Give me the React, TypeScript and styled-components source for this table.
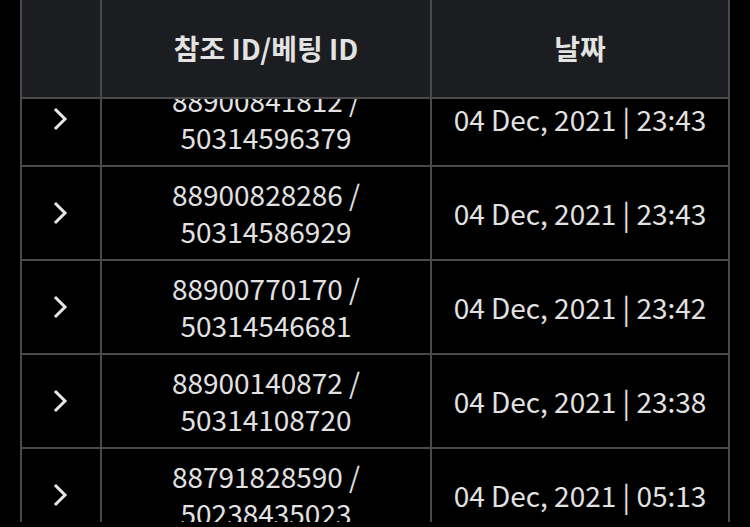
import React, { useLayoutEffect, useRef } from "react";
import styled, { createGlobalStyle } from "styled-components";

const Global = createGlobalStyle`
  html, body { margin: 0; padding: 0; background: #000; }
  body { font-family: "Noto Sans CJK KR", "Noto Sans", sans-serif; color: #e6e6e6; }
  * { box-sizing: border-box; }
`;

const Page = styled.div`
  width: 750px;
  height: 527px;
  background: #000;
  padding-left: 20px;
  overflow: hidden;
`;

const Table = styled.div`
  width: 710px;
  height: 522px;
  border-left: 2px solid #4a4a4d;
  display: flex;
  flex-direction: column;
`;

const Grid = styled.div`
  display: grid;
  grid-template-columns: 80px 330px 298px;
`;

const HeaderRow = styled(Grid)`
  background: #1c1d21;
  flex: none;
`;

const HeadCell = styled.div`
  height: 99px;
  border-right: 2px solid #4a4a4d;
  border-bottom: 2px solid #4a4a4d;
  display: flex;
  align-items: center;
  justify-content: center;
  font-size: 28px;
  font-weight: 700;
  color: #e3e3e3;
  padding-bottom: 2px;
`;

const Body = styled.div`
  flex: 1;
  overflow-y: auto;
  scrollbar-width: none;
  &::-webkit-scrollbar { display: none; }
`;

const Cell = styled.div`
  height: 94px;
  border-right: 2px solid #4a4a4d;
  border-bottom: 2px solid #4a4a4d;
  display: flex;
  flex-direction: column;
  align-items: center;
  justify-content: center;
  font-size: 28px;
  font-weight: 400;
  line-height: 37px;
  color: #e2e2e2;
  text-align: center;
`;

const Chevron = styled.svg`
  width: 18px;
  height: 24px;
  display: block;
`;

const rows = [
  { ref: "88900841812", bet: "50314596379", date: "04 Dec, 2021 | 23:43" },
  { ref: "88900828286", bet: "50314586929", date: "04 Dec, 2021 | 23:43" },
  { ref: "88900770170", bet: "50314546681", date: "04 Dec, 2021 | 23:42" },
  { ref: "88900140872", bet: "50314108720", date: "04 Dec, 2021 | 23:38" },
  { ref: "88791828590", bet: "50238435023", date: "04 Dec, 2021 | 05:13" },
];

export default function App() {
  const bodyRef = useRef<HTMLDivElement>(null);
  useLayoutEffect(() => {
    if (bodyRef.current) bodyRef.current.scrollTop = 26;
  }, []);
  return (
    <Page>
      <Global />
      <Table>
        <HeaderRow>
          <HeadCell />
          <HeadCell>참조 ID/베팅 ID</HeadCell>
          <HeadCell>날짜</HeadCell>
        </HeaderRow>
        <Body ref={bodyRef}>
          {rows.map((r) => (
            <Grid key={r.ref}>
              <Cell>
                <Chevron viewBox="0 0 18 24">
                  <polyline
                    points="4,3 13,12 4,21"
                    fill="none"
                    stroke="#e6e6e6"
                    strokeWidth="3"
                    strokeLinecap="square"
                    strokeLinejoin="miter"
                  />
                </Chevron>
              </Cell>
              <Cell>
                <span>{r.ref} /</span>
                <span>{r.bet}</span>
              </Cell>
              <Cell>{r.date}</Cell>
            </Grid>
          ))}
        </Body>
      </Table>
    </Page>
  );
}
